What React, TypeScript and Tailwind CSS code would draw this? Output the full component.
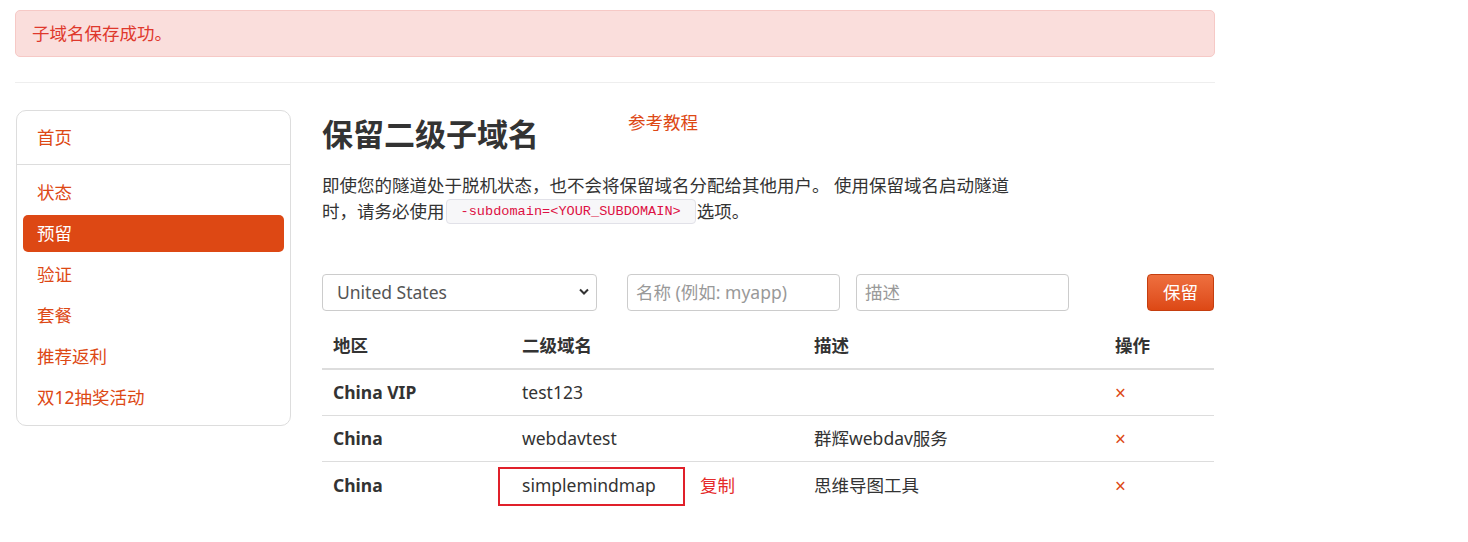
import React from "react";

const font = { fontFamily: '"Noto Sans", "Noto Sans CJK SC", sans-serif' };

function Sidebar() {
  const items = ["状态", "预留", "验证", "套餐", "推荐返利", "双12抽奖活动"];
  return (
    <div className="w-[275px] shrink-0 rounded-[10px] border border-[#dddddd] pb-[9px]">
      <div className="flex h-[54px] items-center border-b border-[#dddddd] pl-[20px] text-[#dd4814]">首页</div>
      <div className="flex flex-col gap-[4px] px-[6px] pt-[9px]">
        {items.map((it) => (
          <div
            key={it}
            className={
              "flex h-[37px] items-center rounded-[5px] pl-[14px] " +
              (it === "预留" ? "bg-[#dd4814] text-white" : "text-[#dd4814]")
            }
          >
            {it}
          </div>
        ))}
      </div>
    </div>
  );
}

const rows = [
  { region: "China VIP", sub: "test123", desc: "" },
  { region: "China", sub: "webdavtest", desc: "群辉webdav服务" },
  { region: "China", sub: "simplemindmap", desc: "思维导图工具", mark: true },
];

export default function App() {
  return (
    <div className="w-[1468px] h-[542px] bg-white text-[17.5px] text-[#333333] overflow-hidden" style={font}>
      <div className="w-[1200px] ml-[15px] pt-[10px]">
        <div className="flex h-[47px] items-center rounded-[5px] border border-[#f6c9c6] bg-[#fadedc] pl-[16px] text-[#df382c]">
          子域名保存成功。
        </div>
        <div className="mt-[25px] h-px bg-[#eeeeee]" />
        <div className="mt-[27px] flex">
          <div className="ml-[1px]">
            <Sidebar />
          </div>
          <div className="ml-[31px] w-[892px]">
            <div className="flex items-start">
              <h3 className="mt-[3px] text-[31px] font-bold leading-[42px] text-[#333333]">保留二级子域名</h3>
              <a className="ml-[89px] text-[#dd4814] leading-[24px]">参考教程</a>
            </div>
            <p className="mt-[17px] leading-[26px] text-[#333333]">
              即使您的隧道处于脱机状态，也不会将保留域名分配给其他用户。 使用保留域名启动隧道
              <br />
              时，请务必使用
              <code
                className="relative top-[-2px] mx-[1px] inline-block h-[25px] align-middle rounded-[4px] border border-[#e1e1e8] bg-[#f7f7f9] px-[14px] text-[13.6px] leading-[23px] text-[#dd1144]"
                style={{ fontFamily: '"Liberation Mono", monospace' }}
              >
                -subdomain=&lt;YOUR_SUBDOMAIN&gt;
              </code>
              选项。
            </p>
            <div className="mt-[48px] flex items-center">
              <div className="relative flex h-[37px] w-[275px] items-center rounded-[4px] border border-[#cccccc] pl-[14px] text-[#555555]">
                United States
                <svg className="absolute right-[7px] top-[13px]" width="10" height="8" viewBox="0 0 10 8">
                  <path d="M1 1.5 L5 5.5 L9 1.5" stroke="#333" strokeWidth="2" fill="none" />
                </svg>
              </div>
              <div className="ml-[30px] flex h-[37px] w-[213px] items-center rounded-[4px] border border-[#cccccc] pl-[8px] text-[#999999]">
                名称 (例如: myapp)
              </div>
              <div className="ml-[16px] flex h-[37px] w-[213px] items-center rounded-[4px] border border-[#cccccc] pl-[8px] text-[#999999]">
                描述
              </div>
              <div className="ml-[78px] flex h-[37px] w-[67px] items-center justify-center rounded-[4px] border border-[#c53e0f] bg-gradient-to-b from-[#ee6f3e] to-[#dd4814] text-white">
                保留
              </div>
            </div>
            <div className="mt-[11px]">
              <div className="flex h-[48px] items-center border-b-2 border-[#dddddd] font-bold">
                <div className="w-[189px] pl-[11px]">地区</div>
                <div className="w-[292px] pl-[11px]">二级域名</div>
                <div className="w-[301px] pl-[11px]">描述</div>
                <div className="pl-[11px]">操作</div>
              </div>
              {rows.map((r, i) => (
                <div
                  key={i}
                  className={"relative flex h-[46px] items-center " + (i < rows.length - 1 ? "border-b border-[#dddddd]" : "")}
                >
                  <div className="w-[189px] pl-[11px] font-bold">{r.region}</div>
                  <div className="w-[292px] pl-[11px]">{r.sub}</div>
                  <div className="w-[301px] pl-[11px]">{r.desc}</div>
                  <div className="pl-[11px] pt-[3px] text-[19px] leading-none text-[#dd4814]">×</div>
                  {r.mark && (
                    <>
                      <div className="absolute left-[176px] top-[5px] h-[39px] w-[187px] border-2 border-[#e0202a]" />
                      <span className="absolute left-[378px] top-[10px] text-[#e52b2b]">复制</span>
                    </>
                  )}
                </div>
              ))}
            </div>
          </div>
        </div>
      </div>
    </div>
  );
}
